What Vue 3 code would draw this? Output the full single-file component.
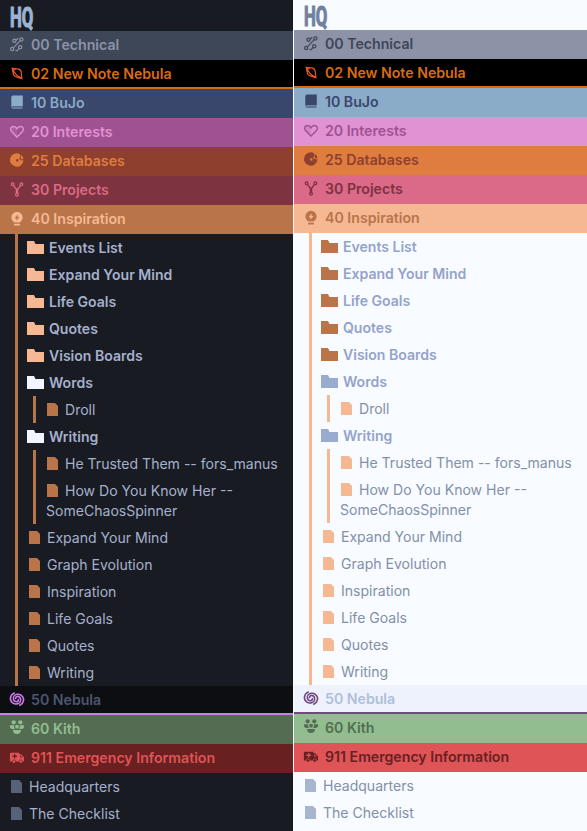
<script setup>
const sections = [
  { id: 'technical', label: '00 Technical' },
  { id: 'note', label: '02 New Note Nebula' },
  { id: 'bujo', label: '10 BuJo' },
  { id: 'interests', label: '20 Interests' },
  { id: 'databases', label: '25 Databases' },
  { id: 'projects', label: '30 Projects' },
  { id: 'inspiration', label: '40 Inspiration' },
  { id: 'nebula', label: '50 Nebula' },
  { id: 'kith', label: '60 Kith' },
  { id: 'emergency', label: '911 Emergency Information' },
]
const folders = [
  { label: 'Events List' },
  { label: 'Expand Your Mind' },
  { label: 'Life Goals' },
  { label: 'Quotes' },
  { label: 'Vision Boards' },
  { label: 'Words', files: ['Droll'] },
  { label: 'Writing', files: ['He Trusted Them -- fors_manus', 'How Do You Know Her -- SomeChaosSpinner'] },
]
const files = ['Expand Your Mind', 'Graph Evolution', 'Inspiration', 'Life Goals', 'Quotes', 'Writing']
const rootFiles = ['Headquarters', 'The Checklist']
</script>

<template>
  <main class="app">
    <section v-for="theme in ['dark', 'light']" :key="theme" class="panel" :class="theme">
      <header class="title"><span>HQ</span></header>
      <template v-for="s in sections" :key="s.id">
        <div class="bar" :class="s.id">
          <svg class="icon" viewBox="0 0 16 16" fill="none" stroke="currentColor" stroke-width="1.2">
            <g v-if="s.id === 'technical'">
              <circle cx="12.4" cy="2.4" r="1.6" /><circle cx="5.4" cy="3.8" r="1.6" />
              <circle cx="3.2" cy="12" r="1.6" /><circle cx="11.2" cy="10.3" r="1.6" />
              <path d="M7 3.3 9.3 1.3M4.3 10.8 11.3 3.6M9.9 11.6 8.2 13.6H6.5" />
            </g>
            <g v-else-if="s.id === 'note'">
              <path d="M4.1 6.6C4 3.8 6 2.5 8.5 2.8 11 3.2 12.4 5 12.3 7.2L12.9 12.6 8 11.2C5.8 10.8 4.2 9 4.1 6.6Z" />
              <path d="M4.1 6.4 3.2 2.2 7.4 3M3.2 2.2C5 6.7 8.3 10.3 12.8 12.4" />
            </g>
            <g v-else-if="s.id === 'bujo'" fill="currentColor" stroke="none">
              <path d="M4.3.4H13.8V11.3H4.4C3.5 11.3 3 11.6 2.3 12.4V2.3C2.3 1.2 3.1.4 4.3.4Z" />
              <path d="M2.5 12.7C2.8 12 3.7 11.7 4.5 11.7H13.5V14H4.5C3.5 14 2.6 13.6 2.5 12.7Z" opacity=".55" />
            </g>
            <g v-else-if="s.id === 'interests'">
              <path d="M8 13.1 2.7 7.8C.5 5.3 1.8 2.5 4.5 2.5 6.1 2.5 7.3 3.4 8 4.7 8.7 3.4 9.9 2.5 11.5 2.5 14.2 2.5 15.5 5.3 13.3 7.8Z" stroke-width="1.4" />
              <path d="M8 4.7V13L2.7 7.6C1.2 5.4 2 3 4.5 2.6Z" fill="currentColor" stroke="none" opacity=".2" />
            </g>
            <g v-else-if="s.id === 'databases'" fill="currentColor" stroke="none">
              <path fill-rule="evenodd" d="M11 1.2A6.7 6.7 0 1 0 14.4 7.2H11.4V6.2H10.2V4.8H11ZM8.3 6.1A1.3 1.3 0 1 1 8.3 8.7 1.3 1.3 0 0 1 8.3 6.1Z" />
              <path d="M11.6 1.5A6.7 6.7 0 0 1 14.4 6.3H12.2L11.6 4.6Z" />
            </g>
            <g v-else-if="s.id === 'projects'">
              <circle cx="3.6" cy="2.2" r="1.4" /><circle cx="12.4" cy="2.2" r="1.4" /><circle cx="8" cy="12.8" r="1.4" />
              <path d="M4.4 3.4 7.4 7.3V11.3M11.6 3.4 8.6 7.3V11.3" stroke-width="1.3" />
            </g>
            <g v-else-if="s.id === 'inspiration'" fill="currentColor" stroke="none">
              <path fill-rule="evenodd" d="M5.5 11.6C3.5 10.3 2.4 8.4 2.4 6.4A5.6 5.6 0 0 1 13.6 6.4C13.6 8.4 12.5 10.3 10.5 11.6ZM8.6 3.4 5.5 7.2H7.4V9.8L10.5 6H8.6Z" />
              <rect x="5" y="12.7" width="6" height="1.7" rx=".4" />
            </g>
            <g v-else-if="s.id === 'nebula'" stroke-width="1.65">
              <path d="M9.2 7.1A1.9 1.9 0 0 1 8 9.7 3.1 3.1 0 0 1 4.4 7.1 4.3 4.3 0 0 1 8 2.3 5.7 5.7 0 0 1 14.6 7.1 6.8 6.8 0 0 1 10.2 13.4" />
              <path d="M6.8 7.1A1.9 1.9 0 0 1 8 4.5 3.1 3.1 0 0 1 11.6 7.1 4.3 4.3 0 0 1 8 11.9 5.7 5.7 0 0 1 1.4 7.1 6.8 6.8 0 0 1 5.8.8" />
            </g>
            <g v-else-if="s.id === 'kith'" fill="currentColor" stroke="none">
              <circle cx="4.7" cy="1.3" r="2.1" /><circle cx="11.3" cy="1.3" r="2.1" /><circle cx="8" cy="5.7" r="1.9" />
              <path d="M.9 4.3H5.3C4.9 5.9 5.1 7.1 6 8H3.2C1.8 8 .7 6.9.9 4.3ZM15.1 4.3H10.7C11.1 5.9 10.9 7.1 10 8H12.8C14.2 8 15.3 6.9 15.1 4.3ZM4 9H12C12 11.6 10.6 13 8 13S4 11.6 4 9Z" />
            </g>
            <g v-else fill="currentColor" stroke="none">
              <path fill-rule="evenodd" d="M1.6 2.7H9.8Q10.4 2.7 10.4 3.4V4.3H12L15 7.2V11.4H13.7A1.9 1.9 0 0 0 9.9 11.4H6.8A1.9 1.9 0 0 0 3 11.4H.9V3.4Q.9 2.7 1.6 2.7ZM5 4V5.6H3.4V6.9H5V8.5H6.3V6.9H7.9V5.6H6.3V4ZM11.2 5.4V7.6H13.6L11.6 5.4Z" />
              <circle cx="4.9" cy="11.6" r="1.4" /><circle cx="11.8" cy="11.6" r="1.4" />
            </g>
          </svg>
          <span class="label">{{ s.label }}</span>
        </div>
        <div v-if="s.id === 'inspiration'" class="tree">
          <template v-for="f in folders" :key="f.label">
            <div class="folder" :class="{ open: f.files }">
              <svg class="folder-icon" viewBox="0 0 17 13"><path d="M0 0H7L8.5 3H17V13H0Z" fill="currentColor" /></svg>
              <span>{{ f.label }}</span>
            </div>
            <div v-if="f.files" class="branch">
              <div v-for="n in f.files" :key="n" class="file nested">
                <svg class="file-icon" viewBox="0 0 11 13"><path d="M0 0H8L11 3V13H0Z" fill="currentColor" /></svg><span>{{ n }}</span>
              </div>
            </div>
          </template>
          <div v-for="n in files" :key="n" class="file">
            <svg class="file-icon" viewBox="0 0 11 13"><path d="M0 0H8L11 3V13H0Z" fill="currentColor" /></svg><span>{{ n }}</span>
          </div>
        </div>
      </template>
      <div v-for="n in rootFiles" :key="n" class="file root">
        <svg class="file-icon" viewBox="0 0 11 13"><path d="M0 0H8L11 3V13H0Z" fill="currentColor" /></svg><span>{{ n }}</span>
      </div>
    </section>
  </main>
</template>

<style>
body { margin: 0; background: #f8fbff; }
</style>

<style scoped>
.app { display: grid; grid-template-columns: 293px 293px; column-gap: 1px; height: 831px; overflow: hidden; font: 14.06px/20px Inter, sans-serif; }
.panel { background: var(--bg); color: var(--text); overflow: hidden; }
.dark { --bg: #181b21; --text: #a6b0ce; --strong: #a6b0ce; --title: #9bb4d2; --fold: #f6b893; --open: #f0f5ff; --leaf: #b9744a; --line: #b9744a; --rootleaf: #576177; }
.light { --bg: #f8fbff; --text: #8390a8; --strong: #94a3c9; --title: #70819f; --fold: #b9744a; --open: #9aabd0; --leaf: #f6b893; --line: #f6b893; --rootleaf: #a7b5ce; }
.title { box-sizing: border-box; height: 31px; padding: 3px 0 0 10px; color: var(--title); font: 700 27px/31px Roboto, sans-serif; }
.light .title { height: 30px; padding-top: 2px; }
.title span { display: inline-block; transform: scaleX(.62); transform-origin: left; -webkit-text-stroke: 1.2px currentColor; }
.bar { box-sizing: border-box; height: 29px; display: flex; align-items: flex-start; padding: 4px 0 0 9px; font-weight: 600; font-size: 14.15px; }
.icon { width: 16px; height: 16px; margin: 2px 6px 0 0; flex: none; overflow: visible; }
.dark .technical { background: #3d4757; color: #8e92a9; }
.light .technical { background: #8e92a7; color: #3d4757; }
.note { background: #000; color: #d96c10; border-bottom: 2px solid #d96c10; }
.note .icon { color: #f0572b; }
.dark .bujo { background: #38476b; color: #8aacc9; }
.light .bujo { background: #8aacc9; color: #38476b; }
.dark .interests { background: #a05192; color: #e092d2; }
.light .interests { background: #e092d2; color: #a05192; }
.dark .databases { background: #8f3f2d; color: #df7c40; }
.light .databases { background: #df7c40; color: #8f3f2d; }
.dark .projects { background: #7d3340; color: #db6988; }
.light .projects { background: #db6988; color: #7d3340; }
.dark .inspiration { background: #b9744a; color: #f6b893; }
.light .inspiration { background: #f6b893; color: #b9744a; }
.dark .nebula { background: #0d0e12; color: #4b5670; border-bottom: 2px solid #cd7bea; }
.dark .nebula .icon { color: #cd7bea; }
.light .nebula { background: #eef2fd; color: #aebfda; border-bottom: 2px solid #734882; }
.light .nebula .icon { color: #734882; }
.dark .kith { background: #546d52; color: #92bd90; }
.light .kith { background: #92bd90; color: #546d52; }
.dark .emergency { background: #682021; color: #df5456; }
.light .emergency { background: #df5456; color: #682021; }
.tree { margin-left: 15px; border-left: 3px solid var(--line); }
.folder { box-sizing: border-box; height: 27px; display: flex; padding: 4px 0 0 9px; font-weight: 600; color: var(--strong); }
.folder-icon { width: 17px; height: 13px; margin: 3px 5px 0 0; color: var(--fold); }
.open .folder-icon { color: var(--open); }
.file { padding: 4px 0 3px 11px; }
.file-icon { display: inline-block; width: 11px; height: 13px; margin-right: 7px; vertical-align: -1px; color: var(--leaf); }
.branch { margin-left: 15px; border-left: 3px solid var(--line); }
.nested { padding-left: 10px; }
.nested .file-icon { margin-left: 1px; }
.root .file-icon { color: var(--rootleaf); }
</style>
